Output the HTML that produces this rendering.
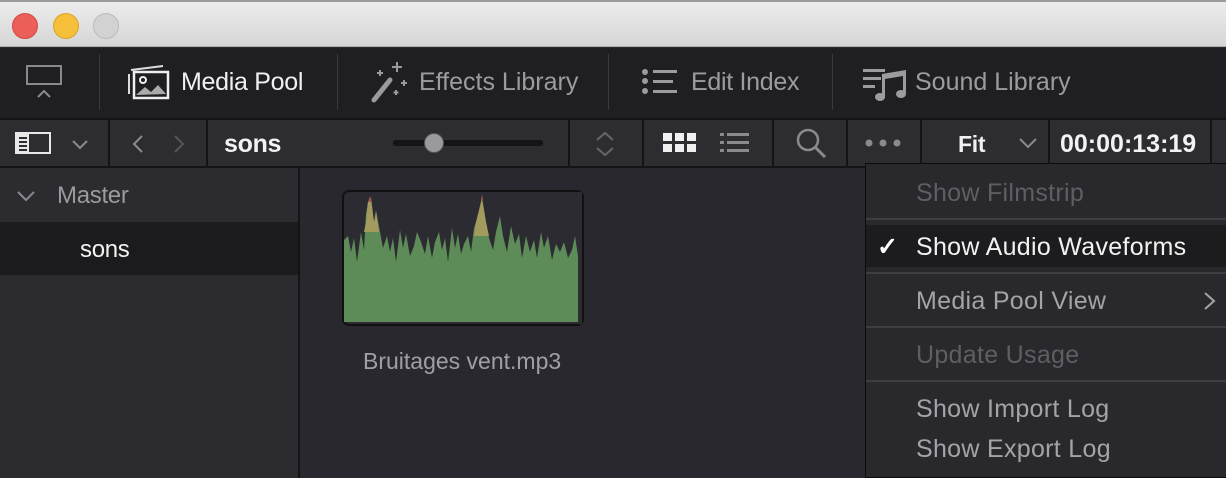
<!DOCTYPE html>
<html><head><meta charset="utf-8"><style>
*{margin:0;padding:0;box-sizing:border-box}
body{width:1226px;height:478px;overflow:hidden;background:#28282e;font-family:"Liberation Sans",sans-serif;position:relative}
.abs{position:absolute}
.t{position:absolute;white-space:nowrap;letter-spacing:-0.3px}
.m{font-size:25px;letter-spacing:0.3px}
</style></head><body>
<div class="abs" style="left:0;top:0;width:1226px;height:47px;background:linear-gradient(#ececec,#d6d6d6);border-top:2px solid #9a9a9a;border-bottom:1px solid #b0b0b0"></div>
<div class="abs" style="left:12px;top:13px;width:26px;height:26px;border-radius:50%;background:#ec5f58;border:1px solid #d24b44"></div>
<div class="abs" style="left:53px;top:13px;width:26px;height:26px;border-radius:50%;background:#f5bf3a;border:1px solid #dba52a"></div>
<div class="abs" style="left:93px;top:13px;width:26px;height:26px;border-radius:50%;background:#d2d2d2;border:1px solid #bbb"></div>
<div class="abs" style="left:0;top:48px;width:1226px;height:70px;background:#1f1f23"></div>
<div class="abs" style="left:99px;top:54px;width:1px;height:56px;background:#3a3a3e"></div>
<div class="abs" style="left:337px;top:54px;width:1px;height:56px;background:#3a3a3e"></div>
<div class="abs" style="left:608px;top:54px;width:1px;height:56px;background:#3a3a3e"></div>
<div class="abs" style="left:832px;top:54px;width:1px;height:56px;background:#3a3a3e"></div>
<svg class="abs" style="left:26px;top:64px" width="40" height="36"><rect x="1" y="2" width="34" height="18" fill="none" stroke="#8a8a8e" stroke-width="2"/><path d="M12 33 L18 27 L24 33" fill="none" stroke="#8a8a8e" stroke-width="2"/></svg>
<svg class="abs" style="left:127px;top:64px" width="44" height="36"><path d="M2 10 L2 30 M4 6 L36 2" stroke="#ddd" stroke-width="2" fill="none"/><rect x="7" y="8" width="34" height="26" fill="none" stroke="#eee" stroke-width="2.5"/><circle cx="16" cy="16" r="3" fill="none" stroke="#eee" stroke-width="2"/><path d="M9 31 L18 23 L24 28 L31 21 L39 30 Z" fill="#aaa"/></svg>
<div class="t" style="left:181px;top:68px;font-size:25px;color:#f0f0f0">Media Pool</div>
<svg class="abs" style="left:368px;top:60px" width="44" height="44"><path d="M6 40 L22 20" stroke="#9a9a9e" stroke-width="5" stroke-linecap="round"/><path d="M29 2v10M24 7h10M12 10v6M9 13h6M36 20v6M33 23h6M28 30v5M25.5 32.5h5" stroke="#9a9a9e" stroke-width="2"/></svg>
<div class="t" style="left:419px;top:68px;font-size:25px;color:#9c9ca0;letter-spacing:0">Effects Library</div>
<svg class="abs" style="left:640px;top:68px" width="40" height="28"><g fill="#9c9ca0"><circle cx="5" cy="4" r="3"/><circle cx="5" cy="13" r="3"/><circle cx="5" cy="23" r="3"/><rect x="13" y="2" width="24" height="3"/><rect x="13" y="12" width="20" height="3"/><rect x="13" y="22" width="24" height="3"/></g></svg>
<div class="t" style="left:691px;top:68px;font-size:25px;color:#9c9ca0">Edit Index</div>
<svg class="abs" style="left:862px;top:66px" width="48" height="36"><g fill="#9c9ca0"><rect x="1" y="3" width="22" height="3"/><rect x="1" y="11" width="18" height="3"/><rect x="1" y="19" width="12" height="3"/><path d="M20 8 L44 4 L44 28 L41 28 L41 10 L23 13 L23 32 L20 32Z"/><ellipse cx="18" cy="31" rx="5" ry="4"/><ellipse cx="39" cy="28" rx="5" ry="4"/></g></svg>
<div class="t" style="left:915px;top:68px;font-size:25px;color:#9c9ca0;letter-spacing:0">Sound Library</div>
<div class="abs" style="left:0;top:118px;width:1226px;height:50px;background:#141416"></div>
<div class="abs" style="left:0;top:120px;width:108px;height:46px;background:#2c2c31"></div>
<div class="abs" style="left:110px;top:120px;width:96px;height:46px;background:#2c2c31"></div>
<div class="abs" style="left:208px;top:120px;width:360px;height:46px;background:#2c2c31"></div>
<div class="abs" style="left:570px;top:120px;width:72px;height:46px;background:#2c2c31"></div>
<div class="abs" style="left:644px;top:120px;width:128px;height:46px;background:#2c2c31"></div>
<div class="abs" style="left:774px;top:120px;width:72px;height:46px;background:#2c2c31"></div>
<div class="abs" style="left:848px;top:120px;width:72px;height:46px;background:#2c2c31"></div>
<div class="abs" style="left:922px;top:120px;width:126px;height:46px;background:#2c2c31"></div>
<div class="abs" style="left:1050px;top:120px;width:160px;height:46px;background:#2c2c31"></div>
<div class="abs" style="left:1212px;top:120px;width:14px;height:46px;background:#2c2c31"></div>
<svg class="abs" style="left:15px;top:131px" width="80" height="26"><rect x="1" y="2" width="34" height="20" fill="none" stroke="#e8e8e8" stroke-width="2"/><rect x="1" y="2" width="13" height="20" fill="#e8e8e8"/><g stroke="#2c2c31" stroke-width="2"><path d="M4 7h8M4 11h8M4 15h8M4 19h8"/></g><path d="M58 10 L65 17 L72 10" fill="none" stroke="#8a8a8e" stroke-width="2"/></svg>
<svg class="abs" style="left:128px;top:131px" width="62" height="26"><path d="M14 5 L6 13 L14 21" fill="none" stroke="#8a8a8e" stroke-width="2"/><path d="M47 5 L55 13 L47 21" fill="none" stroke="#55555a" stroke-width="2"/></svg>
<div class="t" style="left:224px;top:130px;font-size:25px;font-weight:bold;color:#f2f2f2">sons</div>
<div class="abs" style="left:393px;top:140px;width:150px;height:6px;border-radius:3px;background:#141416"></div>
<div class="abs" style="left:424px;top:133px;width:20px;height:20px;border-radius:50%;background:#9a9a9c;border:1px solid #555"></div>
<svg class="abs" style="left:594px;top:130px" width="24" height="28"><path d="M3 10 L11 3 L19 10M3 18 L11 25 L19 18" fill="none" stroke="#66666a" stroke-width="2"/></svg>
<svg class="abs" style="left:663px;top:131px" width="90" height="24"><g fill="#f0f0f0"><rect x="0" y="2" width="9" height="8"/><rect x="12" y="2" width="9" height="8"/><rect x="24" y="2" width="9" height="8"/><rect x="0" y="13" width="9" height="8"/><rect x="12" y="13" width="9" height="8"/><rect x="24" y="13" width="9" height="8"/></g><g fill="#8a8a8e"><rect x="57" y="2" width="4" height="3"/><rect x="57" y="10" width="4" height="3"/><rect x="57" y="18" width="4" height="3"/><rect x="64" y="2" width="22" height="3"/><rect x="64" y="10" width="22" height="3"/><rect x="64" y="18" width="22" height="3"/></g></svg>
<svg class="abs" style="left:794px;top:126px" width="34" height="34"><circle cx="14" cy="14" r="10" fill="none" stroke="#8a8a8e" stroke-width="2.5"/><path d="M21 21 L31 31" stroke="#8a8a8e" stroke-width="3"/></svg>
<svg class="abs" style="left:864px;top:138px" width="40" height="10"><g fill="#8a8a8e"><circle cx="5" cy="5" r="3.5"/><circle cx="19" cy="5" r="3.5"/><circle cx="33" cy="5" r="3.5"/></g></svg>
<div class="t" style="left:958px;top:131px;font-size:23px;font-weight:bold;color:#f0f0f0">Fit</div>
<svg class="abs" style="left:1018px;top:134px" width="22" height="18"><path d="M2 5 L10 13 L18 5" fill="none" stroke="#8a8a8e" stroke-width="2"/></svg>
<div class="t" style="left:1060px;top:130px;font-size:25px;font-weight:bold;color:#f2f2f2;letter-spacing:0">00:00:13:19</div>
<div class="abs" style="left:0;top:168px;width:298px;height:310px;background:#2b2b30"></div>
<div class="abs" style="left:298px;top:168px;width:2px;height:310px;background:#141416"></div>
<svg class="abs" style="left:16px;top:188px" width="22" height="16"><path d="M2 4 L10 12 L18 4" fill="none" stroke="#8a8a8e" stroke-width="2"/></svg>
<div class="t" style="left:57px;top:182px;font-size:24px;color:#9a9a9e">Master</div>
<div class="abs" style="left:0;top:222px;width:298px;height:53px;background:#1b1b1d"></div>
<div class="t" style="left:80px;top:236px;font-size:24px;color:#f2f2f2">sons</div>
<div class="abs" style="left:342px;top:190px;width:242px;height:136px;border-radius:7px;background:#111;"></div>
<svg class="abs" style="left:344px;top:192px" width="238" height="132">
<rect width="238" height="132" rx="5" fill="#2b2b31"/>
<path d="M0 130 V48 L4 44 L7 60 L10 46 L13 70 L17 40 L20 58 L22 22 L24 10 L27 6 L30 30 L32 18 L36 40 L39 56 L43 44 L46 60 L49 46 L52 70 L56 38 L59 56 L62 42 L66 64 L70 54 L73 40 L77 50 L81 62 L84 44 L88 66 L91 50 L95 40 L98 58 L101 46 L104 70 L108 36 L111 56 L114 42 L117 62 L120 52 L124 44 L127 60 L130 36 L134 24 L138 6 L142 30 L145 46 L149 58 L152 40 L156 24 L159 44 L163 60 L167 34 L171 52 L175 42 L178 66 L182 44 L186 60 L190 48 L193 66 L197 40 L200 56 L204 44 L208 68 L212 52 L216 60 L220 50 L224 66 L228 58 L231 44 L234 64 V130 Z" fill="#5e8c59"/>
<path d="M22 30 L24 10 L27 6 L30 30 L32 20 L35 40 L20 40Z M132 30 L138 6 L142 30 L145 44 L130 44Z" fill="#a39b5e"/>
<path d="M24 10 L26 4 L28 10Z M137 8 L138 2 L139 8Z" fill="#9a5a50"/>
<rect x="234" y="0" width="4" height="132" fill="#2b2b31"/>
</svg>
<div class="t" style="left:363px;top:348px;font-size:23px;color:#a0a0a4;letter-spacing:0">Bruitages vent.mp3</div>
<div class="abs" style="left:865px;top:163px;width:361px;height:315px;background:#28282d;border:1px solid #0c0c0e;border-right:none"></div>
<div class="abs" style="left:866px;top:218px;width:360px;height:2px;background:#3d3d42"></div>
<div class="abs" style="left:866px;top:225px;width:360px;height:42px;background:#1c1c1f"></div>
<div class="abs" style="left:866px;top:272px;width:360px;height:2px;background:#3d3d42"></div>
<div class="abs" style="left:866px;top:326px;width:360px;height:2px;background:#3d3d42"></div>
<div class="abs" style="left:866px;top:380px;width:360px;height:2px;background:#3d3d42"></div>
<div class="t m" style="left:916px;top:179px;color:#5e5e63">Show Filmstrip</div>
<div class="t" style="left:877px;top:232px;font-size:25px;font-weight:bold;color:#fff">✓</div>
<div class="t m" style="left:916px;top:233px;color:#f2f2f2">Show Audio Waveforms</div>
<div class="t m" style="left:916px;top:287px;color:#a4a4a8">Media Pool View</div>
<svg class="abs" style="left:1202px;top:290px" width="16" height="22"><path d="M3 3 L12 11 L3 19" fill="none" stroke="#a4a4a8" stroke-width="2"/></svg>
<div class="t m" style="left:916px;top:341px;color:#5e5e63">Update Usage</div>
<div class="t m" style="left:916px;top:395px;color:#a4a4a8">Show Import Log</div>
<div class="t m" style="left:916px;top:435px;color:#a4a4a8">Show Export Log</div>
</body></html>
